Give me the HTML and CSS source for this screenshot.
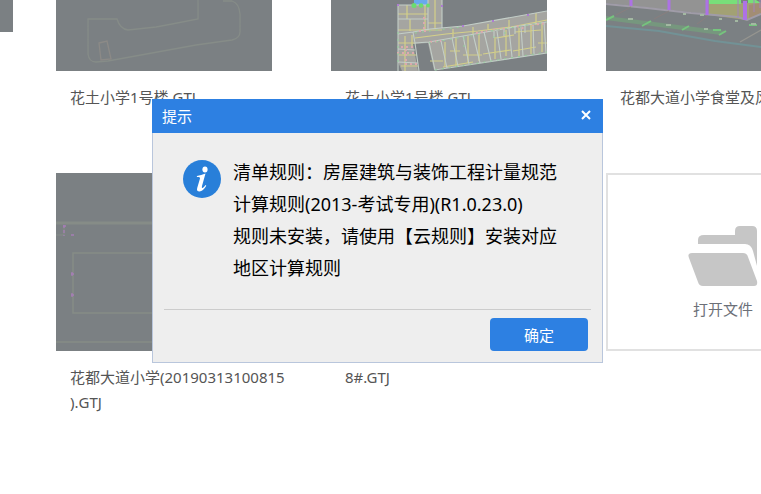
FILE: index.html
```html
<!DOCTYPE html>
<html lang="zh-CN">

<head>
    <meta charset="UTF-8">
    <meta name="viewport" content="width=device-width, initial-scale=1.0">
    <title>提示</title>
    <link rel="stylesheet" href="styles.css">
</head>

<body>
    <main class="recent">
        <div class="edge"></div>
        <div class="files">
            <div class="file">
                <svg class="thumb" viewBox="0 0 216 71" aria-hidden="true">
                    <g fill="none" stroke="#868c88" stroke-width="1.3">
                        <path d="M142 0V19L116 24L100 27L72 30Q64 29 61 19H32V54Q33 62 40 62L52 61L140 45L176 40Q184 38 184 32V14Q183 3 176 1H167" />
                        <path d="M43 43L51 41L55 59L45 60Z" stroke="#8c8a87" />
                    </g>
                </svg>
                <div class="name">花土小学1号楼.GTJ</div>
            </div>
            <div class="file">
                <svg class="thumb" viewBox="0 0 216 71" aria-hidden="true">
                    <path fill="#a5a5a1" d="M67 5H97V0H111V28L132 26L216 11V53L103 70L97 43L82 44L87 71H71L67 62Z" />
                    <path fill="#68a9ee" d="M83 0h14v5h-14z" />
                    <g fill="none" stroke="#d4d089" stroke-width="1.2">
                        <path d="M67 14H97M76 5V19M67 30H111M94 5V31M104 0V29M97 23H111M79 19V31" />
                        <path d="M84 38L115 34L147 31L180 27L216 20M142 27V34M122 29V38M157 24V30M178 20V29M205 13V25" />
                        <path d="M74 36V71M67 43H84M68 55H86M70 66H87M81 35V47M99 61H112M119 51H129M125 38V66M112 67L142 62" />
                        <path d="M114 42V66M132 55H151M137 36V63M148 33V61M152 54L180 50M164 37V59M175 30V56" />
                        <path d="M182 51L205 47M188 28V56M200 25V54M207 43H216M211 22V52M165 38L183 35M184 32L210 30" />
                    </g>
                    <g fill="none" stroke="#c3cec8" stroke-width="1.1">
                        <path d="M67 71V5H97M111 0V28L132 26L216 11M67 34L82 32L99 29L132 26M82 32L84 43L98 42L155 32L183 27L216 22" />
                        <path d="M84 43L88 71M98 42L104 70L216 53M110 41L116 68M121 38L127 66M132 36L138 64M142 34L149 63M153 32L160 61" />
                        <path d="M166 31L170 59M178 29L181 57M190 27L192 56M202 25L203 54M213 22L215 53M163 30V38M173 28V36M184 26V34M194 24V33" />
                        <path d="M97 0V30M67 19H97M67 49L84 50M67 62L87 63" />
                    </g>
                    <g fill="none" stroke="#dca9ae" stroke-width="2" stroke-dasharray="2 3">
                        <path d="M93 17V32M88 31H97M66 53H83M70 47H82M74 64H86M75 49V64M162 30L177 28M186 26L194 29M201 25L216 23M99 42L110 41M145 33L156 31" />
                    </g>
                    <path fill="none" stroke="#93cf9b" stroke-width="1" stroke-dasharray="2 5" d="M67 32V65M84 33L130 27M98 43L151 34M160 31L216 22M163 38V30M174 34V28M104 70L216 52M133 47V37" />
                    <g fill="#ad7cd2">
                        <path d="M66 4h2v2h-2zM110 5h2v2h-2zM131 25h2v2h-2zM161 20h2v2h-2zM196 14h2v2h-2z" />
                    </g>
                    <g fill="#6bdc70">
                        <circle cx="83" cy="5.5" r="2.5" />
                        <circle cx="90" cy="5.5" r="2.3" />
                        <circle cx="97" cy="5.5" r="2" />
                    </g>
                </svg>
                <div class="name">花土小学1号楼.GTJ</div>
            </div>
            <div class="file">
                <svg class="thumb" viewBox="0 0 216 71" aria-hidden="true">
                    <path fill="#939393" d="M0 0H103V14L0 3Z" />
                    <path fill="#a2a174" d="M103 3H155V13L140 20L103 15Z" />
                    <path fill="#78df79" d="M103 0H135V4H103ZM142 0H150L155 3H142Z" />
                    <path fill="#a28d74" d="M143 5L155 3V13L143 20Z" />
                    <path fill="none" stroke="#a09ca8" stroke-width="2" d="M0 4L41 8L85 13L132 17L141 20L155 14" />
                    <path fill="none" stroke="#ad72e5" stroke-width="3" d="M25 0V6M63 0V10M101 0V15" />
                    <path fill="none" stroke="#ad72e5" stroke-width="4" d="M139 1V20" />
                    <path fill="none" stroke="#a084ba" stroke-width="1" d="M132 0V18M148 0V12M154 0V8" />
                    <path fill="#76977e" d="M0 16L120 31L115 35L0 20Z" />
                    <path fill="none" stroke="#76c47e" stroke-width="2" d="M0 20L8 16M36 26L45 21M76 30L83 26M113 35L120 31M107 30h8M143 25h8" />
                    <path fill="none" stroke="#a3b8a2" stroke-width="2" d="M77 14h3M94 15h4M113 19h3M129 21h3M145 24h5M22 19h5M60 25h5M98 29h4" />
                    <path fill="none" stroke="#729296" stroke-width="2" d="M0 26L53 31L109 41L155 47L216 55" />
                    <path fill="none" stroke="#969590" stroke-width="1.3" d="M134 42L155 30" />
                    <path fill="none" stroke="#897e7e" stroke-width="1" d="M10 15L25 7M48 19L63 11M91 24L102 16" />
                </svg>
                <div class="name">花都大道小学食堂及风</div>
            </div>
            <div class="file">
                <svg class="thumb" viewBox="0 0 216 178" aria-hidden="true">
                    <g fill="none" stroke="#868c87">
                        <path d="M0 50H216" stroke-width="3" />
                        <path d="M216 80H17V140H216M0 169H216" stroke-width="1.5" />
                        <path d="M0 62H8V53" stroke-width="1" />
                    </g>
                    <g fill="none" stroke="#a77eb6" stroke-width="1.3">
                        <path d="M8 52V63" stroke-dasharray="3 2" />
                        <path d="M15 62h3M16 99v4M15 101h3M16 120v4M15 122h3M7 53h3" />
                    </g>
                </svg>
                <div class="name">花都大道小学(20190313100815<br>).GTJ</div>
            </div>
            <div class="file">
                <svg class="thumb" viewBox="0 0 216 178" aria-hidden="true"></svg>
                <div class="name">8#.GTJ</div>
            </div>
            <button class="open" type="button">
                <svg class="folder" viewBox="0 0 70 60" aria-hidden="true">
                    <g fill="#c6c6c6">
                        <path d="M10 18V14Q10 9 16 9H47V5Q47 0 52 0H64Q69 0 69 5V40L65 25Q63 18 57 18Z" />
                        <path d="M4 27H55Q59 27 60 31L69 55Q70 60 66 60H15Q11 60 10 56L1 32Q-1 27 4 27Z" />
                    </g>
                </svg>
                <span>打开文件</span>
            </button>
        </div>
    </main>

    <div class="dialog" role="dialog" aria-labelledby="title">
        <div class="dialog-head">
            <span id="title">提示</span>
            <button class="close" type="button" aria-label="关闭">
                <svg viewBox="0 0 10 10" aria-hidden="true">
                    <path d="M1 1L9 9M9 1L1 9" stroke="#fff" stroke-width="2" />
                </svg>
            </button>
        </div>
        <div class="dialog-body">
            <svg class="info" viewBox="0 0 38 38" aria-hidden="true">
                <circle cx="19" cy="19" r="19" fill="#287fd9" />
                <ellipse cx="22" cy="9.5" rx="2.6" ry="2.9" fill="#fff" />
                <path fill="#fff" d="M14 16Q18 15 22.500 13.500L19 26Q18.300 28.500 20 27.700Q21 27 22.500 25L23.300 25.800Q20 31.500 16.500 31.500Q13.300 31.500 14.200 28L17 18.500Q17.300 17 15.800 17H13.800Z" />
            </svg>
            <p class="message">
                清单规则：房屋建筑与装饰工程计量规范<br>
                计算规则(2013-考试专用)(R1.0.23.0)<br>
                规则未安装，请使用【云规则】安装对应<br>
                地区计算规则
            </p>
        </div>
        <div class="dialog-foot">
            <button class="ok" type="button">确定</button>
        </div>
    </div>
</body>

</html>
```
FILE: styles.css
```css
* {
    box-sizing: border-box;
    margin: 0;
    padding: 0;
}

body {
    min-height: 100vh;
    overflow: hidden;
    background-color: #fff;
    color: #555;
    font-family: "Noto Sans", "Noto Sans CJK SC", sans-serif;
    font-size: 15px;
}

button {
    border: none;
    font-family: inherit;
    font-size: 15px;
    cursor: pointer;
}

.recent {
    display: flex;
    gap: 43px;
    overflow: hidden;
}

/* end of the card scrolled off to the left */
.edge {
    flex: none;
    width: 13px;
    height: 32px;
    background-color: #7b8083;
}

.files {
    flex: none;
    display: grid;
    grid-template-columns: 216px 216px 234px;
    gap: 38px 59px;
    align-items: start;
}

.thumb {
    display: block;
    width: 216px;
    background-color: #7b8083;
}

.name {
    min-height: 50px;
    margin: 14px 0 0 14px;
    line-height: 25px;
    white-space: nowrap;
}

.open {
    display: flex;
    flex-direction: column;
    align-items: center;
    gap: 12px;
    height: 178px;
    padding-top: 51px;
    border: 2px solid #e1e1e1;
    background-color: #fff;
    color: #6c7078;
}

.folder {
    width: 70px;
    height: 60px;
}

/* dialog floats over the file list */
.dialog {
    position: absolute;
    top: 99px;
    left: 152px;
    width: 451px;
    border: 1px solid #b9c6dc;
    border-top: none;
    background-color: #eee;
}

.dialog-head {
    display: flex;
    align-items: center;
    justify-content: space-between;
    height: 34px;
    margin: 0 -1px;
    padding: 0 12px 2px 10px;
    background-color: #2d80e2;
    color: #fff;
}

.close {
    width: 10px;
    height: 10px;
    background: none;
}

.close svg {
    display: block;
}

.dialog-body {
    display: flex;
    gap: 12px;
    padding: 23px 10px 25px 30px;
}

.info {
    flex: none;
    width: 38px;
    height: 38px;
    margin-top: 4px;
}

.message {
    color: #000;
    font-size: 18px;
    line-height: 32px;
    white-space: nowrap;
}

.dialog-foot {
    display: flex;
    justify-content: flex-end;
    margin: 0 11px;
    padding: 8px 3px 11px;
    border-top: 1px solid #ccc;
}

.ok {
    width: 98px;
    height: 33px;
    border-radius: 4px;
    background-color: #2d80e2;
    color: #fff;
}
```
